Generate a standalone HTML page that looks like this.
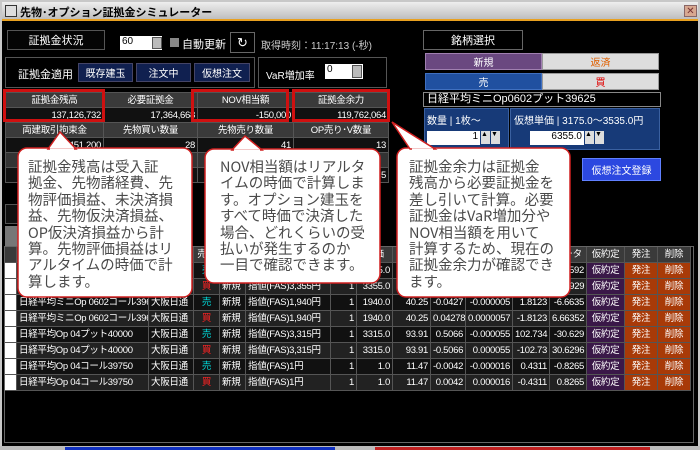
<!DOCTYPE html>
<html><head><meta charset="utf-8"><style>
*{box-sizing:border-box;margin:0;padding:0}
body{width:700px;height:450px;overflow:hidden;background:#c8c8c8;font-family:"Liberation Sans","Noto Sans CJK JP",sans-serif;font-size:11px;color:#fff;position:relative}
.a{position:absolute}
.c{display:flex;align-items:center;justify-content:center}
table{border-collapse:collapse;table-layout:fixed}
td{border:1px solid #555;height:16px;font-size:9.5px;letter-spacing:-0.3px;white-space:nowrap;overflow:hidden;padding:0 2px;line-height:14px}
.s td{height:15px;line-height:13px}
.r{text-align:right}.m{text-align:center}
.bt{font-size:14.5px;line-height:16.4px;color:#4a4a4a;font-family:"Noto Sans CJK JP",sans-serif;white-space:nowrap}
</style></head><body>
<div class="a" style="left:2px;top:2px;width:696px;height:18px;background:linear-gradient(#eee,#bbb);"></div>
<div class="a" style="left:5px;top:5px;width:12px;height:12px;border:1px solid #333;background:#ddd"></div>
<div class="a" style="left:20px;top:4px;color:#000;font-weight:bold;font-size:11px">先物･オプション証拠金シミュレーター</div>
<div class="a c" style="left:684px;top:5px;width:13px;height:12px;background:#d8a890;border:1px solid #866;color:#733;font-size:10px">✕</div>
<div class="a" style="left:2px;top:19px;width:696px;height:428px;background:#000;border-top:2px solid #e8a020"></div>
<div class="a c" style="left:7px;top:30px;width:98px;height:20px;border:1px solid #555;background:#050505;font-size:11px">証拠金状況</div>
<div class="a" style="left:120px;top:36px;width:42px;height:14px;background:#fff;color:#000;font-size:10px;padding-left:2px">60</div>
<div class="a" style="left:152px;top:37px;width:10px;height:12px;background:#bbb;border:1px solid #555"></div>
<div class="a" style="left:170px;top:38px;width:9px;height:9px;background:#888"></div>
<div class="a" style="left:182px;top:36px;font-size:11px">自動更新</div>
<div class="a c" style="left:230px;top:32px;width:25px;height:21px;border:1px solid #666;font-size:13px">↻</div>
<div class="a" style="left:261px;top:37px;font-size:10px;color:#ccc">取得時刻：11:17:13 (-秒)</div>
<div class="a" style="left:5px;top:57px;width:250px;height:31px;border:1px solid #555"></div>
<div class="a" style="left:18px;top:66px;font-size:11px">証拠金適用</div>
<div class="a c" style="left:78px;top:63px;width:55px;height:19px;background:#102050;border:1px solid #446;font-size:10px">既存建玉</div>
<div class="a c" style="left:136px;top:63px;width:55px;height:19px;background:#102050;border:1px solid #446;font-size:10px">注文中</div>
<div class="a c" style="left:194px;top:63px;width:56px;height:19px;background:#102050;border:1px solid #446;font-size:10px">仮想注文</div>
<div class="a" style="left:258px;top:57px;width:129px;height:31px;border:1px solid #555"></div>
<div class="a" style="left:266px;top:67px;font-size:10px">VaR増加率</div>
<div class="a" style="left:325px;top:64px;width:38px;height:15px;background:#fff;color:#000;font-size:10px;padding-left:2px">0</div>
<div class="a" style="left:352px;top:65px;width:10px;height:13px;background:#bbb;border:1px solid #555"></div>
<div class="a s" style="left:5px;top:92px">
<table style="width:383px"><colgroup><col style="width:98px"><col style="width:94px"><col style="width:96px"><col style="width:95px"></colgroup>
<tr style="background:#3a3a3a"><td class="m">証拠金残高</td><td class="m">必要証拠金</td><td class="m">NOV相当額</td><td class="m">証拠金余力</td></tr>
<tr style="background:#111"><td class="r">137,126,732</td><td class="r">17,364,668</td><td class="r">-150,000</td><td class="r">119,762,064</td></tr>
<tr style="background:#3a3a3a"><td class="m">両建取引拘束金</td><td class="m">先物買い数量</td><td class="m">先物売り数量</td><td class="m">OP売り･V数量</td></tr>
<tr style="background:#111"><td class="r">5,451,200</td><td class="r">28</td><td class="r">41</td><td class="r">13</td></tr>
<tr style="background:#333"><td></td><td></td><td></td><td></td></tr>
<tr style="background:#111"><td></td><td></td><td></td><td class="r">5</td></tr>
</table></div>
<div class="a" style="left:3px;top:89px;width:102px;height:33px;border:3px solid #d01010"></div>
<div class="a" style="left:191px;top:89px;width:98px;height:33px;border:3px solid #d01010"></div>
<div class="a" style="left:292px;top:89px;width:98px;height:33px;border:3px solid #d01010"></div>
<div class="a" style="left:5px;top:204px;width:14px;height:20px;background:#111;border:1px solid #555"></div>
<div class="a" style="left:5px;top:226px;width:14px;height:20px;background:#777"></div>
<div class="a c" style="left:423px;top:30px;width:100px;height:20px;background:#000;border:1px solid #666;font-size:11px">銘柄選択</div>
<div class="a c" style="left:425px;top:53px;width:117px;height:17px;background:#6a4880;border:1px solid #a080b0;font-size:10px">新規</div>
<div class="a c" style="left:542px;top:53px;width:117px;height:17px;background:#ddd;border:1px solid #999;color:#e06000;font-size:10px">返済</div>
<div class="a c" style="left:425px;top:73px;width:117px;height:17px;background:#2050a0;border:1px solid #4070c0;font-size:10px">売</div>
<div class="a c" style="left:542px;top:73px;width:117px;height:17px;background:#ddd;border:1px solid #999;color:#e00000;font-size:10px">買</div>
<div class="a" style="left:423px;top:92px;width:238px;height:15px;background:#000;border:1px solid #888;font-size:11px;padding-left:3px;line-height:13px">日経平均ミニOp0602プット39625</div>
<div class="a" style="left:424px;top:108px;width:85px;height:40px;background:#173a78;border:1px solid #3a60a0"></div>
<div class="a" style="left:427px;top:112px;font-size:10px">数量 | 1枚～</div>
<div class="a" style="left:427px;top:131px;width:53px;height:14px;background:#fff;color:#000;font-size:10px;text-align:right;padding-right:2px">1</div>
<div class="a" style="left:481px;top:131px;width:9px;height:13px;background:#ddd;color:#000;font-size:7px">▲</div>
<div class="a" style="left:491px;top:131px;width:9px;height:13px;background:#ddd;color:#000;font-size:7px">▼</div>
<div class="a" style="left:510px;top:108px;width:150px;height:42px;background:#173a78;border:1px solid #3a60a0"></div>
<div class="a" style="left:514px;top:112px;font-size:10px">仮想単価 | 3175.0～3535.0円</div>
<div class="a" style="left:530px;top:131px;width:54px;height:14px;background:#fff;color:#000;font-size:10px;text-align:right;padding-right:2px">6355.0</div>
<div class="a" style="left:585px;top:131px;width:9px;height:13px;background:#ddd;color:#000;font-size:7px">▲</div>
<div class="a" style="left:595px;top:131px;width:9px;height:13px;background:#ddd;color:#000;font-size:7px">▼</div>
<div class="a c" style="left:582px;top:158px;width:79px;height:23px;background:#2c48e0;border:1px solid #6080ff;font-size:10px">仮想注文登録</div>
<div class="a" style="left:4px;top:246px">
<table style="width:686px"><colgroup>
<col style="width:12px"><col style="width:132px"><col style="width:45px"><col style="width:26px"><col style="width:26px"><col style="width:85px"><col style="width:26px"><col style="width:36px"><col style="width:38px"><col style="width:35px"><col style="width:47px"><col style="width:37px"><col style="width:37px"><col style="width:38px"><col style="width:33px"><col style="width:33px"></colgroup>
<tr style="background:#3a3a3a"><td></td><td class="m">銘柄</td><td class="m">市場</td><td class="m">売買</td><td class="m">区分</td><td class="m">注文</td><td class="m">数量</td><td class="m">単価</td><td class="m">時価</td><td class="m">デルタ</td><td class="m">ガンマ</td><td class="m">ベガ</td><td class="m">セータ</td><td class="m">仮約定</td><td class="m">発注</td><td class="m">削除</td></tr>
<tr style="background:#111"><td style="background:#fff"></td><td>日経平均ミニOp 0602プット39625</td><td>大阪日通</td><td class="m" style="color:#0dd">売</td><td>新規</td><td>指値(FAS)3,355円</td><td class="r">1</td><td class="r">3355.0</td><td class="r">93.91</td><td class="r">0.5066</td><td class="r">-0.000055</td><td class="r">102.73</td><td class="r">-30.592</td><td class="m" style="background:#3a1848">仮約定</td><td class="m" style="background:#a83a08">発注</td><td class="m" style="background:#a83a08">削除</td></tr>
<tr style="background:#222"><td style="background:#fff"></td><td>日経平均ミニOp 0602プット39625</td><td>大阪日通</td><td class="m" style="color:#f22">買</td><td>新規</td><td>指値(FAS)3,355円</td><td class="r">1</td><td class="r">3355.0</td><td class="r">93.91</td><td class="r">-0.5066</td><td class="r">0.000055</td><td class="r">-102.73</td><td class="r">30.5929</td><td class="m" style="background:#3a1848">仮約定</td><td class="m" style="background:#a83a08">発注</td><td class="m" style="background:#a83a08">削除</td></tr>
<tr style="background:#111"><td style="background:#fff"></td><td>日経平均ミニOp 0602コール39625</td><td>大阪日通</td><td class="m" style="color:#0dd">売</td><td>新規</td><td>指値(FAS)1,940円</td><td class="r">1</td><td class="r">1940.0</td><td class="r">40.25</td><td class="r">-0.0427</td><td class="r">-0.000005</td><td class="r">1.8123</td><td class="r">-6.6635</td><td class="m" style="background:#3a1848">仮約定</td><td class="m" style="background:#a83a08">発注</td><td class="m" style="background:#a83a08">削除</td></tr>
<tr style="background:#222"><td style="background:#fff"></td><td>日経平均ミニOp 0602コール39625</td><td>大阪日通</td><td class="m" style="color:#f22">買</td><td>新規</td><td>指値(FAS)1,940円</td><td class="r">1</td><td class="r">1940.0</td><td class="r">40.25</td><td class="r">0.04278</td><td class="r">0.0000057</td><td class="r">-1.8123</td><td class="r">6.66352</td><td class="m" style="background:#3a1848">仮約定</td><td class="m" style="background:#a83a08">発注</td><td class="m" style="background:#a83a08">削除</td></tr>
<tr style="background:#111"><td style="background:#fff"></td><td>日経平均Op 04プット40000</td><td>大阪日通</td><td class="m" style="color:#0dd">売</td><td>新規</td><td>指値(FAS)3,315円</td><td class="r">1</td><td class="r">3315.0</td><td class="r">93.91</td><td class="r">0.5066</td><td class="r">-0.000055</td><td class="r">102.734</td><td class="r">-30.629</td><td class="m" style="background:#3a1848">仮約定</td><td class="m" style="background:#a83a08">発注</td><td class="m" style="background:#a83a08">削除</td></tr>
<tr style="background:#222"><td style="background:#fff"></td><td>日経平均Op 04プット40000</td><td>大阪日通</td><td class="m" style="color:#f22">買</td><td>新規</td><td>指値(FAS)3,315円</td><td class="r">1</td><td class="r">3315.0</td><td class="r">93.91</td><td class="r">-0.5066</td><td class="r">0.000055</td><td class="r">-102.73</td><td class="r">30.6296</td><td class="m" style="background:#3a1848">仮約定</td><td class="m" style="background:#a83a08">発注</td><td class="m" style="background:#a83a08">削除</td></tr>
<tr style="background:#111"><td style="background:#fff"></td><td>日経平均Op 04コール39750</td><td>大阪日通</td><td class="m" style="color:#0dd">売</td><td>新規</td><td>指値(FAS)1円</td><td class="r">1</td><td class="r">1.0</td><td class="r">11.47</td><td class="r">-0.0042</td><td class="r">-0.000016</td><td class="r">0.4311</td><td class="r">-0.8265</td><td class="m" style="background:#3a1848">仮約定</td><td class="m" style="background:#a83a08">発注</td><td class="m" style="background:#a83a08">削除</td></tr>
<tr style="background:#222"><td style="background:#fff"></td><td>日経平均Op 04コール39750</td><td>大阪日通</td><td class="m" style="color:#f22">買</td><td>新規</td><td>指値(FAS)1円</td><td class="r">1</td><td class="r">1.0</td><td class="r">11.47</td><td class="r">0.0042</td><td class="r">0.000016</td><td class="r">-0.4311</td><td class="r">0.8265</td><td class="m" style="background:#3a1848">仮約定</td><td class="m" style="background:#a83a08">発注</td><td class="m" style="background:#a83a08">削除</td></tr>
</table></div>
<div class="a" style="left:4px;top:246px;width:690px;height:197px;border:1px solid #666;pointer-events:none"></div>
<div class="a" style="left:0;top:446px;width:700px;height:4px;background:#bbb"></div>
<div class="a" style="left:65px;top:447px;width:270px;height:3px;background:#1030c0"></div>
<div class="a" style="left:375px;top:447px;width:275px;height:3px;background:#c02020"></div>
<svg class="a" style="left:0;top:0" width="700" height="450">
<g fill="#fff" stroke="#d02020" stroke-width="1.5">
<rect x="18" y="148" width="174" height="149" rx="9"/>
<rect x="205" y="149" width="175" height="134" rx="9"/>
<rect x="397" y="148" width="173" height="149" rx="9"/>
<polygon points="48,149 60,132 76,149"/>
<polygon points="232,150 245,136 262,150"/>
<polygon points="410,149 392,122 435,149"/>
</g>
<g stroke="#fff" stroke-width="3">
<line x1="50" y1="150" x2="74" y2="150"/>
<line x1="234" y1="151" x2="260" y2="151"/>
<line x1="412" y1="150" x2="433" y2="150"/>
</g>
</svg>
<div class="a bt" style="left:28px;top:159px">証拠金残高は受入証<br>拠金、先物諸経費、先<br>物評価損益、未決済損<br>益、先物仮決済損益、<br>OP仮決済損益から計<br>算。先物評価損益はリ<br>アルタイムの時価で計<br>算します。</div>
<div class="a bt" style="left:220px;top:159px">NOV相当額はリアルタ<br>イムの時価で計算しま<br>す。オプション建玉を<br>すべて時価で決済した<br>場合、どれくらいの受<br>払いが発生するのか<br>一目で確認できます。</div>
<div class="a bt" style="left:409px;top:159px">証拠金余力は証拠金<br>残高から必要証拠金を<br>差し引いて計算。必要<br>証拠金はVaR増加分や<br>NOV相当額を用いて<br>計算するため、現在の<br>証拠金余力が確認でき<br>ます。</div>
</body></html>
